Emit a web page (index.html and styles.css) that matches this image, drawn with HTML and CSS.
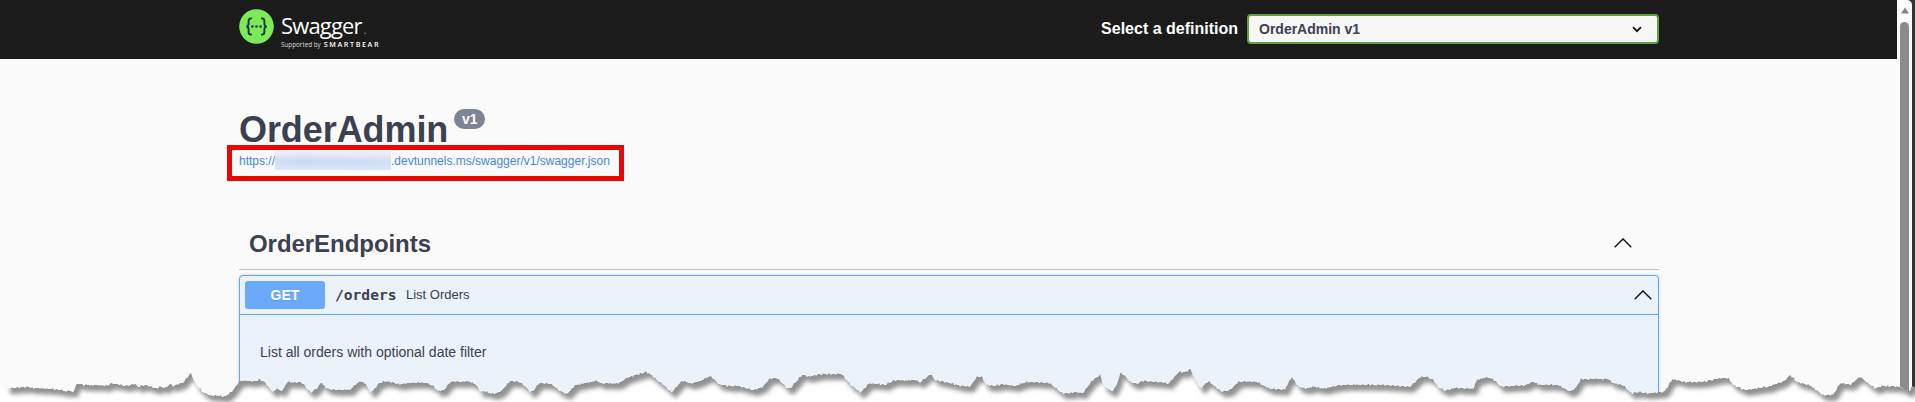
FILE: index.html
```
<!DOCTYPE html>
<html lang="en">
<head>
<meta charset="utf-8">
<title>Swagger UI</title>
<link rel="stylesheet" href="styles.css">
</head>
<body>
<div class="window">
  <div class="page">
    <header class="topbar">
      <div class="wrapper topbar-inner">
        <div class="logo">
          <svg class="logo-mark" viewBox="0 0 35 35">
            <circle cx="17.5" cy="17.5" r="17.3" fill="#7dea58"/>
            <g fill="none" stroke="#173647" stroke-width="1.9">
              <path d="M12.9 9.4H12c-1.8 0-2.4.9-2.4 2.6v2.6c0 1.9-.7 2.8-2.3 2.9 1.600.1 2.300 1 2.300 2.900v2.600c0 1.700.6 2.600 2.400 2.600h.9"/>
              <path d="M22.100 9.400H23c1.800 0 2.400.9 2.400 2.600v2.600c0 1.900.7 2.800 2.300 2.900-1.600.1-2.300 1-2.300 2.900v2.600c0 1.700-.6 2.600-2.400 2.600h-.9"/>
            </g>
            <g fill="#173647"><circle cx="13.400" cy="17.500" r="1.300"/><circle cx="17.500" cy="17.500" r="1.300"/><circle cx="21.600" cy="17.500" r="1.300"/></g>
          </svg>
          <div class="logo-text">
            <div class="logo-name">Swagger<span class="logo-tm">.</span></div>
            <div class="logo-sub"><span>Supported by</span><b>SMARTBEAR</b></div>
          </div>
        </div>
        <div class="definition">
          <span class="definition-label">Select a definition</span>
          <div class="select"><span>OrderAdmin v1</span>
            <svg class="select-arrow" viewBox="0 0 10 7"><path d="M1 1.200 5 5.200 9 1.200" fill="none" stroke="#111" stroke-width="1.700"/></svg>
          </div>
        </div>
      </div>
    </header>
    <main class="wrapper">
      <section class="info">
        <div class="title-row"><h1>OrderAdmin</h1><span class="version">v1</span></div>
        <div class="url-row"><a class="url"><span>https://</span><span class="redacted"></span><span class="url-rest">.devtunnels.ms/swagger/v1/swagger.json</span></a></div>
      </section>
      <section>
        <div class="tag"><h2>OrderEndpoints</h2>
          <svg class="chevron" viewBox="0 0 18 10"><path d="M.7 9.200 9 .9l8.300 8.300" fill="none" stroke="#111" stroke-width="1.400"/></svg>
        </div>
        <div class="opblock">
          <div class="summary">
            <span class="method">GET</span><span class="path">/orders</span><span class="desc">List Orders</span>
            <svg class="chevron" viewBox="0 0 18 10"><path d="M.7 9.200 9 .9l8.300 8.300" fill="none" stroke="#111" stroke-width="1.400"/></svg>
          </div>
          <p class="detail">List all orders with optional date filter</p>
        </div>
      </section>
    </main>
  </div>
  <div class="scrollbar"><svg viewBox="0 0 10 8" class="up"><path d="M5 .5 9.500 7.500H.5z" fill="#858585"/></svg><div class="thumb"></div></div>
  <div class="frame-edge"></div>
</div>
<svg class="tear" viewBox="0 0 1915 402">
  <defs>
    <clipPath id="below"><path id="below-path"/></clipPath>
    <filter id="soft" x="-1%" y="-5%" width="102%" height="110%"><feGaussianBlur stdDeviation="2"/></filter>
  </defs>
  <g clip-path="url(#below)">
    <rect y="350" width="1915" height="52" fill="#fff"/>
    <path id="shade" fill="#929292" filter="url(#soft)"/>
  </g>
</svg>
<script src="tear.js"></script>
</body>
</html>
```
FILE: styles.css
```
* { box-sizing: border-box; }
body { margin: 0; width: 1915px; height: 402px; overflow: hidden; background: #fff; font-family: Arial, "Liberation Sans", sans-serif; color: #3b4151; }
h1, h2, p { margin: 0; }
svg { display: block; flex: none; }
.window { display: flex; height: 402px; background: #333; overflow: hidden; }
.page { flex: 1; background: #fafafa; overflow: hidden; }
.wrapper { width: 1420px; margin-left: 239px; }
.topbar { height: 59px; background: #1b1b1b; }
.topbar-inner { display: flex; justify-content: space-between; }
.logo { display: flex; padding-top: 9px; gap: 7px; }
.logo-mark { width: 35px; height: 35px; }
.logo-text { font-family: "Open Sans", sans-serif; color: #fff; white-space: nowrap; }
.logo-name { font-size: 22px; line-height: 30px; height: 30px; margin-top: 1px; letter-spacing: -.85px; }
.logo-tm { font-size: 10px; color: #aaa; margin-left: 2px; }
.logo-sub { display: flex; gap: 3px; align-items: baseline; font-size: 6.300px; line-height: 8px; color: #ddd; }
.logo-sub b { font-size: 7.200px; letter-spacing: 1.600px; font-weight: 600; color: #fff; }
.definition { display: flex; align-items: center; height: 59px; gap: 9px; }
.definition-label { font-size: 16px; font-weight: 700; color: #fff; padding-bottom: 1px; }
.select { width: 412px; height: 30px; margin-bottom: 1px; border: 2px solid #62a03f; border-radius: 4px; background: #f7f7f7; display: flex; align-items: center; justify-content: space-between; padding: 0 15px 0 10px; font-size: 14px; font-weight: 700; }
.select-arrow { width: 10px; height: 7px; }
.info { padding-top: 48px; height: 167px; }
.title-row { display: flex; align-items: flex-start; gap: 6px; height: 38px; }
h1 { font-size: 36px; line-height: 46px; letter-spacing: -.08px; }
.version { margin-top: 2px; width: 31px; height: 20px; border-radius: 10px; background: #7d8492; color: #fff; font-size: 14px; line-height: 20px; font-weight: 700; text-align: center; }
.url-row { width: 397px; height: 36px; margin-left: -12px; border: 5px solid #eb0505; padding: 1px 7px; }
.url { display: flex; align-items: center; height: 19px; font-size: 12px; color: #4a84dc; white-space: nowrap; }
.redacted { width: 116px; height: 19px; background: radial-gradient(ellipse at 25% 55%, #cbdaf1, transparent 55%), radial-gradient(ellipse at 75% 60%, #cfddf3, transparent 50%), linear-gradient(#e9f0fa, #dce7f7 60%); }
.tag { height: 44px; border-bottom: 1px solid #bdbec3; display: flex; align-items: center; justify-content: space-between; padding: 0 27px 9px 10px; }
.tag h2 { font-size: 24px; line-height: 30px; letter-spacing: -.05px; padding-top: 2px; }
.chevron { width: 18px; height: 10px; }
.opblock { margin-top: 5px; height: 150px; border: 1px solid #61a8fa; border-radius: 4px; background: #ebf2fa; box-shadow: 0 0 3px rgba(0,0,0,.19); }
.summary { height: 39px; border-bottom: 1px solid #61a8fa; display: flex; align-items: center; padding: 0 6px 0 5px; }
.method { width: 80px; height: 28px; border-radius: 3px; background: #6baafb; color: #fff; font-size: 14px; line-height: 28px; font-weight: 700; text-align: center; text-shadow: 0 1px 0 rgba(0,0,0,.1); }
.path { margin-left: 10px; width: 61px; font: 700 14.600px "DejaVu Sans Mono", monospace; padding-bottom: 1px; }
.desc { margin-left: 10px; font-size: 13px; flex: 1; padding-bottom: 2px; }
.detail { padding: 28px 20px; font-size: 14px; line-height: 18px; }
.scrollbar { width: 15px; background: #fcfcfc; border-top-right-radius: 5px; padding: 7px 3px 0; display: flex; flex-direction: column; gap: 8px; }
.up { width: 10px; height: 7px; }
.thumb { width: 9px; flex: 1; border-radius: 5px 5px 0 0; background: #8b8b8b; }
.frame-edge { width: 3px; background: #333; }
.tear { position: absolute; left: 0; top: 0; width: 1915px; height: 402px; }
```
FILE: tear.js
```
// Outline of the torn edge, in thirds of a pixel, as runs of x,y pairs from a start x.
const runs = [
  [0, "0,78 22,84 40,84 60,82 80,80 100,84 150,86 185,90 200,96 206,88 212,96 222,94 226,78 234,70 250,75 325,77 332,69 345,72 375,78 405,72 415,80 437,75 470,86 480,80 495,84 510,72 520,78 550,68 572,39 588,75 612,99 630,106 650,106 675,110 690,98 700,90 720,62 765,64 778,58 795,68 812,90 822,94 832,84 840,93 850,88 862,66 905,68 932,98 952,84 964,66 975,82 990,88 1050,90 1065,75 1082,63 1098,72 1108,96 1120,92 1138,68 1160,64 1200,74 1230,68 1280,68 1300,78 1312,92 1330,92 1352,65 1410,65 1430,76"],
  [1440, "0,95 15,95 40,102 65,92 90,64 118,66 140,82 150,97 160,92 178,68 215,72 235,90 260,103 285,76 350,62 365,70 415,70 440,54 470,44 500,36 520,50 550,75 575,96 605,63 630,70 660,64 690,48 720,74 745,78 775,78 820,90 850,80 868,55 895,56 920,84 932,84 965,45 990,50 1020,42 1085,42 1110,72 1142,98 1168,70 1215,74 1240,62 1310,60 1320,68 1352,42 1365,60 1395,66 1430,74"],
  [2880, "0,78 30,80 50,51 66,51 78,74 100,78 130,72 165,78 200,66 265,68 290,86 310,102 345,96 368,99 395,64 420,44 432,80 456,94 468,80 482,37 512,66 535,72 545,62 585,66 600,66 625,72 655,36 675,36 692,27 700,50 722,86 745,63 785,95 810,90 835,65 890,65 930,86 975,88 995,50 1015,80 1040,86 1060,80 1090,86 1140,75 1205,74 1280,75 1350,80 1380,52 1400,50 1420,60"],
  [4305, "10,82 30,92 60,84 115,86 125,60 155,52 175,58 198,80 270,76 295,64 310,74 340,74 370,76 405,94 420,86 438,58 518,56 535,70 565,76 590,100 610,96 640,100 688,95 712,57 750,66 800,66 860,54 880,54 895,75 930,90 1000,80 1050,62 1065,45 1085,65 1125,76 1165,106 1195,104 1215,70 1245,74 1275,50 1300,70 1320,86 1340,78 1395,80 1420,96 1432,80 1440,80"]
];
const pts = runs.flatMap(([start, text]) => text.split(" ").map(p => {
  const [x, y] = p.split(",").map(Number);
  return [(start + x) / 3, 360 + y / 3];
}));
const edge = [];
let k = 0;
for (let x = 0; x <= 1915; x++) {
  while (k < pts.length - 2 && pts[k + 1][0] < x) k++;
  const [a, b] = [pts[k], pts[k + 1]];
  const y = a[1] + (b[1] - a[1]) * (x - a[0]) / (b[0] - a[0]);
  const rough = Math.sin(x * 1.7) * Math.sin(x * 0.43) * 0.9;
  edge.push([x, Math.round(y + rough)]);
}
const line = edge.map(p => p.join(" ")).join("L");
document.getElementById("below-path").setAttribute("d", "M" + line + "L1915 402L0 402Z");
const shifted = edge.slice(6).map(([x, y]) => (x + 4) + " " + (y + 6)).join("L");
document.getElementById("shade").setAttribute("d", "M10 340L" + shifted + "L1925 340Z");
```
